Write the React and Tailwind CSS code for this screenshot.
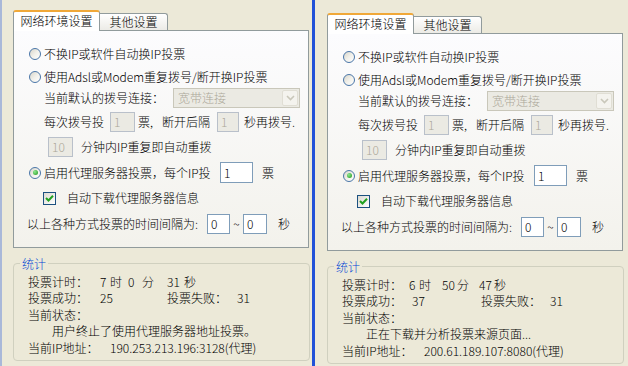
import React from "react";

function Radio({ checked }) {
  return (
    <span className="flex h-[12px] w-[12px] shrink-0 items-center justify-center rounded-full border border-[#4a76a8] bg-linear-to-br from-[#d8d5ca] via-[#f1f0ea] to-white">
      {checked ? (
        <span className="h-[5px] w-[5px] rounded-full bg-[radial-gradient(circle_at_35%_35%,#8fe88f,#1c961c)]" />
      ) : null}
    </span>
  );
}

function Check() {
  return (
    <span className="flex h-[13px] w-[13px] shrink-0 items-center justify-center border border-[#1c5180] bg-linear-to-br from-[#dcdad2] to-white">
      <svg width="9" height="9" viewBox="0 0 9 9">
        <path d="M1 4 L3.5 6.5 L8 1.8" stroke="#21a121" strokeWidth="2" fill="none" />
      </svg>
    </span>
  );
}

function Field({ cls, value, disabled }) {
  return (
    <span
      className={
        "flex shrink-0 items-center pl-[3px] border " +
        (disabled
          ? "border-[#b9c0ca] bg-[#ebeae3] text-[#aca899] "
          : "border-[#7f9db9] bg-white text-black ") +
        cls
      }
    >
      {value}
    </span>
  );
}

function Settings() {
  return (
    <div className="h-[218px] w-[296px] border border-[#919b9c] bg-linear-to-b from-[#fcfcfe] to-[#f3f2ec] pt-[12px]">
      <div className="flex h-[22px] items-center gap-[3px] pl-[15px]">
        <Radio />
        <span>不换IP或软件自动换IP投票</span>
      </div>
      <div className="mt-[1px] flex h-[22px] items-center gap-[3px] pl-[15px]">
        <Radio />
        <span>使用Adsl或Modem重复拨号/断开换IP投票</span>
      </div>
      <div className="flex h-[20px] items-center pl-[30px]">
        <span>当前默认的拨号连接：</span>
        <span className="ml-[9px] flex h-[20px] w-[127px] items-center justify-between border border-[#c9c7ba] bg-[#ebeae3] pl-[4px]">
          <span className="text-[#aca899]">宽带连接</span>
          <span className="mr-px flex h-[16px] w-[16px] items-center justify-center rounded-[2px] border border-[#e0ded4] bg-[#f4f3ee]">
            <svg width="9" height="6" viewBox="0 0 9 6">
              <path d="M1 1 L4.5 4.5 L8 1" stroke="#c9c7ba" strokeWidth="1.6" fill="none" />
            </svg>
          </span>
        </span>
      </div>
      <div className="mt-[4px] flex h-[20px] items-center pl-[30px]">
        <span>每次拨号投</span>
        <Field cls="ml-[6px] h-[20px] w-[25px]" value="1" disabled />
        <span className="ml-[3px] w-[24px]">票,</span>
        <span>断开后隔</span>
        <Field cls="ml-[7px] h-[20px] w-[22px]" value="1" disabled />
        <span className="ml-[5px]">秒再拨号.</span>
      </div>
      <div className="mt-[5px] flex h-[20px] items-center pl-[34px]">
        <Field cls="h-[20px] w-[25px]" value="10" disabled />
        <span className="ml-[8px]">分钟内IP重复即自动重拨</span>
      </div>
      <div className="mt-[5px] flex h-[21px] items-center pl-[15px]">
        <Radio checked />
        <span className="ml-[3px] w-[176px]">启用代理服务器投票，每个IP投</span>
        <Field cls="h-[21px] w-[33px]" value="1" />
        <span className="ml-[9px]">票</span>
      </div>
      <div className="mt-[4px] flex h-[22px] items-center pl-[29px]">
        <Check />
        <span className="ml-[11px]">自动下载代理服务器信息</span>
      </div>
      <div className="mt-[5px] flex h-[20px] items-center pl-[13px]">
        <span className="w-[180px]">以上各种方式投票的时间间隔为:</span>
        <Field cls="h-[20px] w-[23px]" value="0" />
        <span className="w-[13px] text-center">~</span>
        <Field cls="h-[20px] w-[24px]" value="0" />
        <span className="ml-[11px]">秒</span>
      </div>
    </div>
  );
}

function Tabs() {
  return (
    <div className="relative z-10 -mb-px flex h-[21px] items-end">
      <div className="flex h-[21px] w-[87px] items-center justify-center rounded-t-[3px] border-x border-t-2 border-x-[#919b9c] border-t-[#f0a838] bg-white pb-[1px]">
        网络环境设置
      </div>
      <div className="mb-px flex h-[17px] w-[68px] items-center justify-center rounded-tr-[3px] border-r border-t border-[#919b9c] bg-linear-to-b from-white to-[#ecebe6]">
        其他设置
      </div>
    </div>
  );
}

function Stats({ r1, r2, status, ip }) {
  return (
    <fieldset className="mt-[9px] w-[297px] rounded-[4px] border border-[#d0d0bf] pb-[4px]">
      <legend className="ml-[6px] px-[2px] leading-[13px] text-[#0046d5]">统计</legend>
      <div className="pl-[14px] pt-[4px]">
        <div className="flex h-[16px] items-center">
          {r1.map(([t, c], i) => (
            <span key={i} className={"shrink-0 " + c}>{t}</span>
          ))}
        </div>
        <div className="flex h-[16px] items-center">
          {r2.map(([t, c], i) => (
            <span key={i} className={"shrink-0 " + c}>{t}</span>
          ))}
        </div>
        <div className="flex h-[17px] items-center">当前状态：</div>
        <div className="flex h-[16px] items-center pl-[24px]">{status}</div>
        <div className="flex h-[17px] items-center">
          <span className="w-[82px] shrink-0">当前IP地址：</span>
          <span>{ip}</span>
        </div>
      </div>
    </fieldset>
  );
}

function Panel({ wrap, r1, r2, status, ip }) {
  return (
    <div className={"flex h-[366px] shrink-0 flex-col " + wrap}>
      <Tabs />
      <Settings />
      <Stats r1={r1} r2={r2} status={status} ip={ip} />
    </div>
  );
}

export default function App() {
  return (
    <div className="flex h-[366px] w-[628px] overflow-hidden bg-[#ece9d8] font-['SimSun','Noto_Sans_CJK_SC',sans-serif] text-[12px] leading-[14px] font-light text-black">
      <Panel
        wrap="w-[312px] border-l-2 border-[#a9b8d9] pl-[11px] pt-[10px]"
        r1={[
          ["投票计时：", "w-[72px]"],
          ["7", "w-[10px]"],
          ["时", "w-[18px]"],
          ["0", "w-[14px]"],
          ["分", "w-[25px]"],
          ["31", "w-[15px]"],
          ["秒", "ml-[2px]"],
        ]}
        r2={[
          ["投票成功：", "w-[72px]"],
          ["25", "w-[67px]"],
          ["投票失败：", "w-[70px]"],
          ["31", ""],
        ]}
        status="用户终止了使用代理服务器地址投票。"
        ip="190.253.213.196:3128(代理)"
      />
      <Panel
        wrap="w-[316px] border-l-[3px] border-[#2151d8] pl-[12px] pt-[13px]"
        r1={[
          ["投票计时：", "w-[67px]"],
          ["6", "w-[10px]"],
          ["时", "w-[23px]"],
          ["50", "w-[15px]"],
          ["分", "w-[22px]"],
          ["47", "w-[13px]"],
          ["秒", "ml-[2px]"],
        ]}
        r2={[
          ["投票成功：", "w-[70px]"],
          ["37", "w-[69px]"],
          ["投票失败：", "w-[69px]"],
          ["31", ""],
        ]}
        status="正在下载并分析投票来源页面..."
        ip="200.61.189.107:8080(代理)"
      />
    </div>
  );
}
